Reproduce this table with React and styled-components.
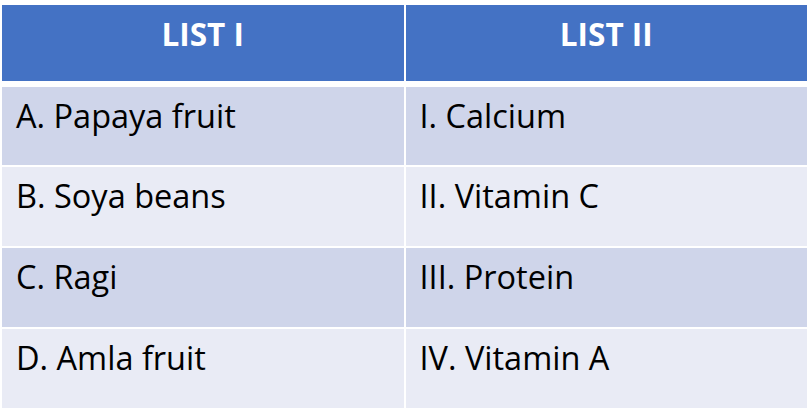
import React from "react";
import styled, { createGlobalStyle } from "styled-components";

const GlobalStyle = createGlobalStyle`
    html, body {
        margin: 0;
        padding: 0;
        background: #ffffff;
    }
`;

const Page = styled.div`
    width: 812px;
    height: 412px;
    box-sizing: border-box;
    padding: 5px 5px 0 2px;
    font-family: "Open Sans", "Noto Sans", sans-serif;
`;

const Table = styled.div`
    display: flex;
    flex-direction: column;
    gap: 2px;
`;

const Row = styled.div`
    display: grid;
    grid-template-columns: 1fr 1fr;
    column-gap: 2px;
    height: ${props => props.$height}px;
    margin-bottom: ${props => (props.$header ? 4 : 0)}px;
`;

const HeaderCell = styled.div`
    background: #4472c4;
    color: #ffffff;
    font-weight: 700;
    font-size: 31.5px;
    line-height: 40px;
    text-align: center;
    padding-top: 9px;
    box-sizing: border-box;
`;

const Cell = styled.div`
    background: ${props => (props.$odd ? "#cfd5ea" : "#e9ebf5")};
    color: #000000;
    font-size: 32.5px;
    line-height: 40px;
    padding: 9px 0 0 14px;
    box-sizing: border-box;
    white-space: nowrap;
`;

const rows = [
    ["A. Papaya fruit", "I. Calcium", 78],
    ["B. Soya beans", "II. Vitamin C", 79],
    ["C. Ragi", "III. Protein", 79],
    ["D. Amla fruit", "IV. Vitamin A", 79],
];

export default function App() {
    return (
        <Page>
            <GlobalStyle />
            <Table>
                <Row $header $height={76}>
                    <HeaderCell>LIST I</HeaderCell>
                    <HeaderCell>LIST II</HeaderCell>
                </Row>
                {rows.map(([left, right, h], i) => (
                    <Row key={left} $height={h}>
                        <Cell $odd={i % 2 === 0}>{left}</Cell>
                        <Cell $odd={i % 2 === 0}>{right}</Cell>
                    </Row>
                ))}
            </Table>
        </Page>
    );
}
